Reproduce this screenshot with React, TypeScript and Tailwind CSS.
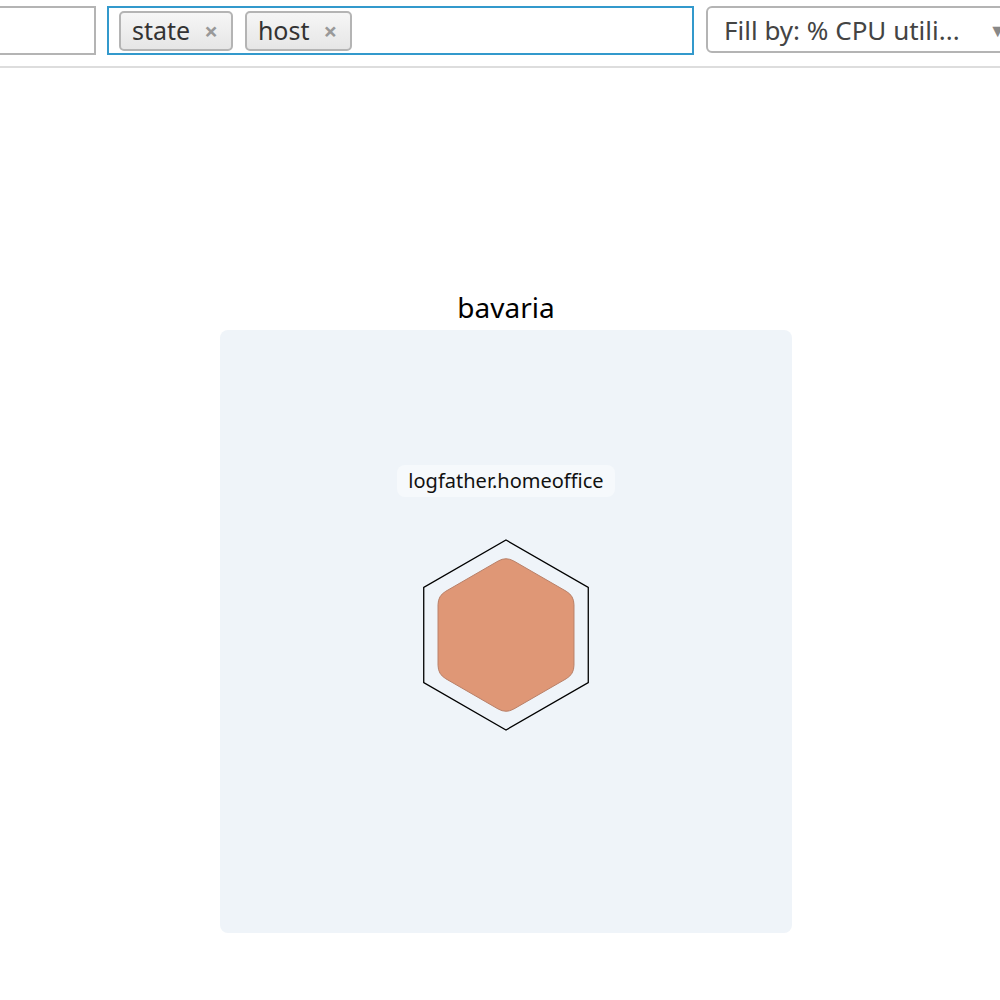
import React from "react";

function hexPoints(cx: number, cy: number, r: number) {
  const pts: [number, number][] = [];
  for (let i = 0; i < 6; i++) {
    const a = ((-90 + 60 * i) * Math.PI) / 180;
    pts.push([cx + r * Math.cos(a), cy + r * Math.sin(a)]);
  }
  return pts;
}

function roundedHexPath(cx: number, cy: number, r: number, cr: number) {
  const pts = hexPoints(cx, cy, r);
  let d = "";
  for (let i = 0; i < 6; i++) {
    const p = pts[i];
    const prev = pts[(i + 5) % 6];
    const next = pts[(i + 1) % 6];
    const len = r;
    const a1: [number, number] = [
      p[0] + ((prev[0] - p[0]) * cr) / len,
      p[1] + ((prev[1] - p[1]) * cr) / len,
    ];
    const a2: [number, number] = [
      p[0] + ((next[0] - p[0]) * cr) / len,
      p[1] + ((next[1] - p[1]) * cr) / len,
    ];
    d += `${i === 0 ? "M" : "L"}${a1[0].toFixed(2)},${a1[1].toFixed(2)} Q${p[0].toFixed(2)},${p[1].toFixed(2)} ${a2[0].toFixed(2)},${a2[1].toFixed(2)} `;
  }
  return d + "Z";
}

function Chip({ label }: { label: string }) {
  return (
    <div className="flex h-[40px] items-center rounded-[5px] border-2 border-[#b4b4b4] bg-gradient-to-b from-[#f6f6f6] to-[#e6e6e6] pl-[11px] pr-[13px]">
      <span className="text-[25px] leading-none text-[#333333]">{label}</span>
      <span className="ml-[14px] text-[24px] font-bold leading-none text-[#999999]">×</span>
    </div>
  );
}

export default function App() {
  const outer = hexPoints(100, 100, 95)
    .map((p) => `${p[0].toFixed(2)},${p[1].toFixed(2)}`)
    .join(" ");
  const inner = roundedHexPath(100, 100, 78.5, 9);
  return (
    <div
      className="h-[1000px] w-[1000px] overflow-hidden bg-white"
      style={{ fontFamily: '"Noto Sans", "Open Sans", sans-serif' }}
    >
      <div className="flex items-start border-b-2 border-[#dddddd] pb-[11px] pt-[6px]">
        <div className="ml-[-100px] h-[49px] w-[196px] shrink-0 border-2 border-[#b4b4b4] bg-white" />
        <div className="ml-[11px] flex h-[49px] w-[587px] shrink-0 items-center gap-[12px] border-2 border-[#3399cc] bg-white pl-[10px]">
          <Chip label="state" />
          <Chip label="host" />
        </div>
        <div className="ml-[12px] flex h-[47px] w-[320px] shrink-0 items-center rounded-[6px] border-2 border-[#b4b4b4] bg-white pl-[16px]">
          <span className="text-[26px] leading-none text-[#444444]">Fill by: % CPU utili...</span>
          <span className="ml-[29px] text-[18px] leading-none text-[#888888]">▼</span>
        </div>
      </div>
      <div className="flex flex-col items-center pt-[219px]">
        <div className="ml-[12px] mb-[3px] h-[40px] text-[28px] leading-[40px] text-black">bavaria</div>
        <div className="ml-[12px] flex h-[603px] w-[572px] flex-col items-center rounded-[8px] bg-[#eff4f9] pt-[135px]">
          <div className="flex h-[32px] items-center rounded-[8px] bg-[#f6f9fc] px-[11px] text-[20px] leading-none text-[#111111]">
            logfather.homeoffice
          </div>
          <svg width="200" height="200" viewBox="0 0 200 200" className="mt-[38px]">
            <polygon points={outer} fill="none" stroke="#000000" strokeWidth="1.3" />
            <path d={inner} fill="#df9776" stroke="#b98068" strokeWidth="1" />
          </svg>
        </div>
      </div>
    </div>
  );
}
